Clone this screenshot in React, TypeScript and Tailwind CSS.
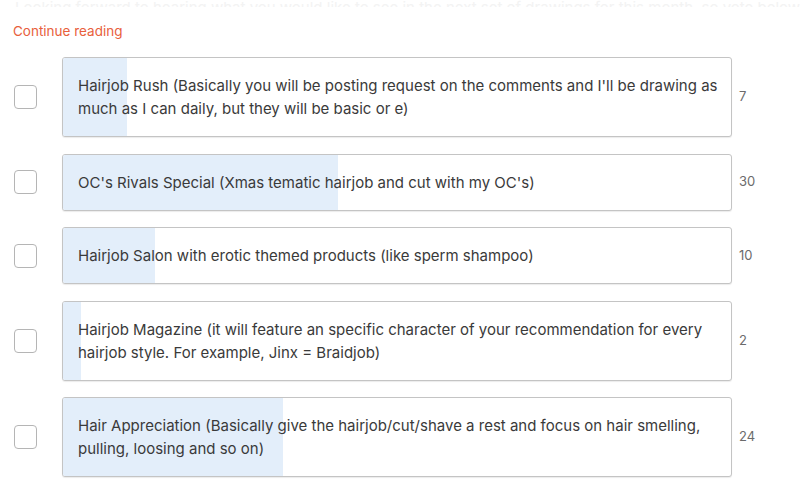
import React from "react";

const items = [
  { text: "Hairjob Rush (Basically you will be posting request on the comments and I'll be drawing as much as I can daily, but they will be basic or e)", votes: 7 },
  { text: "OC's Rivals Special (Xmas tematic hairjob and cut with my OC's)", votes: 30 },
  { text: "Hairjob Salon with erotic themed products (like sperm shampoo)", votes: 10 },
  { text: "Hairjob Magazine (it will feature an specific character of your recommendation for every hairjob style. For example, Jinx = Braidjob)", votes: 2 },
  { text: "Hair Appreciation (Basically give the hairjob/cut/shave a rest and focus on hair smelling, pulling, loosing and so on)", votes: 24 },
];

const total = items.reduce((s, i) => s + i.votes, 0);

export default function App() {
  return (
    <div className="w-[800px] h-[491px] bg-white overflow-hidden" style={{ fontFamily: "Inter, 'Open Sans', sans-serif" }}>
      <div className="h-[7px] overflow-hidden flex items-end pl-[15px]">
        <div className="text-[15px] leading-[20px] text-[#f3f3f3] whitespace-nowrap -mb-[11px]">
          Looking forward to hearing what you would like to see in the next set of drawings for this month, so vote below
        </div>
      </div>
      <div className="pl-[13px] pt-[16px] text-[13.5px] leading-[17px] text-[#e8603c]">Continue reading</div>
      <div className="flex flex-col gap-[16.5px] pt-[17px]">
        {items.map((it, idx) => (
          <div key={idx} className="flex items-center">
            <div className="ml-[14px] w-[23px] h-[24px] rounded-[4px] border border-[#b5b5b5] bg-white shrink-0" />
            <div className="ml-[25px] w-[670px] relative rounded-[3px] border border-[#c4c4c4] shadow-[0_1px_1px_rgba(0,0,0,0.08)] bg-white overflow-hidden">
              <div className="absolute left-0 top-0 bottom-0 bg-[#e3eefa]" style={{ width: `${(it.votes / total) * 100}%` }} />
              <div className="relative py-[16px] pl-[15px] pr-[12px] text-[15px] leading-[23px] text-[#3a3a3a]">{it.text}</div>
            </div>
            <div className="ml-[7px] text-[13px] text-[#6b6b6b]">{it.votes}</div>
          </div>
        ))}
      </div>
    </div>
  );
}
